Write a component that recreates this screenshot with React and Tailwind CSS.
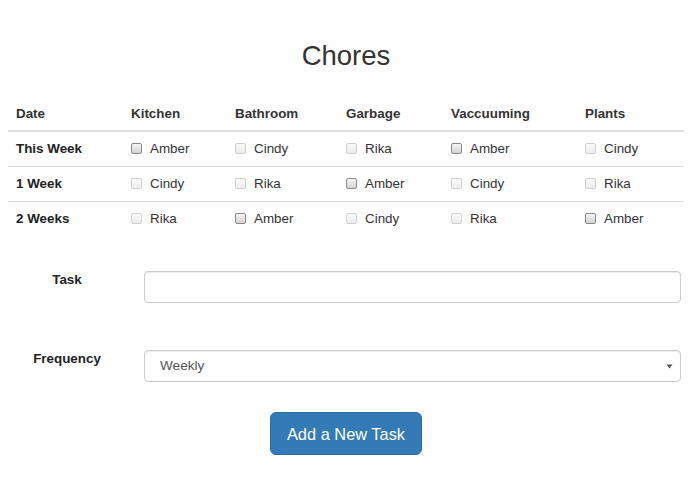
import React from "react";

const cols = ["Kitchen", "Bathroom", "Garbage", "Vaccuuming", "Plants"];
const rows = [
  ["This Week", ["Amber", "Cindy", "Rika", "Amber", "Cindy"]],
  ["1 Week", ["Cindy", "Rika", "Amber", "Cindy", "Rika"]],
  ["2 Weeks", ["Rika", "Amber", "Cindy", "Rika", "Amber"]],
];
const widths = ["w-[115px]", "w-[104px]", "w-[111px]", "w-[105px]", "w-[134px]", "w-[107px]"];

function Box({ on }) {
  return on ? (
    <span className="inline-block w-[11px] h-[11px] rounded-[2px] border border-[#8a8a8a] bg-gradient-to-b from-[#f4f4f4] to-[#d4d4d4] mr-[8px] align-[-1px]" />
  ) : (
    <span className="inline-block w-[11px] h-[11px] rounded-[2px] border border-[#d0d0d0] bg-gradient-to-b from-[#fafafa] to-[#ececec] mr-[8px] align-[-1px]" />
  );
}

export default function App() {
  return (
    <div className="w-[695px] h-[494px] bg-white text-[#333] font-['Liberation_Sans',Arial,sans-serif] text-[13.4px]">
      <div className="pl-[8px] pr-[11px]">
        <h1 className="text-center text-[27.5px] leading-[30px] pt-[41px] pb-[26px]">Chores</h1>
        <table className="w-[676px] border-collapse">
          <thead>
            <tr className="border-b-2 border-[#ddd]">
              <th className="text-left font-bold px-[8px] pt-[8px] pb-[7px] leading-[18px] w-[115px]">Date</th>
              {cols.map((c, i) => (
                <th key={c} className={"text-left font-bold px-[8px] pt-[8px] pb-[7px] leading-[18px] " + widths[i + 1]}>{c}</th>
              ))}
            </tr>
          </thead>
          <tbody>
            {rows.map(([d, names], ri) => (
              <tr key={d} className={ri < 2 ? "border-b border-[#ddd]" : ""}>
                <td className="font-bold px-[8px] py-[8px] leading-[18px] text-[#222]">{d}</td>
                {names.map((n, i) => (
                  <td key={i} className="px-[8px] py-[8px] leading-[18px]">
                    <Box on={n === "Amber"} />
                    {n}
                  </td>
                ))}
              </tr>
            ))}
          </tbody>
        </table>

        <div className="mt-[35px] flex items-start">
          <div className="w-[118px] text-center font-bold leading-[18px] text-[#222]">Task</div>
          <div className="ml-[18px] w-[537px] h-[32px] rounded-[4px] border border-[#ccc] shadow-[inset_0_1px_1px_rgba(0,0,0,0.075)]" />
        </div>

        <div className="mt-[47px] flex items-start">
          <div className="w-[118px] text-center font-bold leading-[18px] text-[#222]">Frequency</div>
          <div className="ml-[18px] w-[537px] h-[32px] rounded-[4px] border border-[#ccc] shadow-[inset_0_1px_1px_rgba(0,0,0,0.075)] flex items-center justify-between pl-[15px] pr-[7px] text-[#555] text-[13.6px]">
            <span>Weekly</span>
            <svg width="7" height="5" viewBox="0 0 7 5"><path d="M0.5 0.5 L6.5 0.5 L3.5 4.5 Z" fill="#555" /></svg>
          </div>
        </div>

        <div className="mt-[30px] flex justify-center">
          <button className="h-[43px] w-[152px] rounded-[6px] bg-[#337ab7] border border-[#2e6da4] text-white text-[16.4px] leading-[20px]">
            Add a New Task
          </button>
        </div>
      </div>
    </div>
  );
}
